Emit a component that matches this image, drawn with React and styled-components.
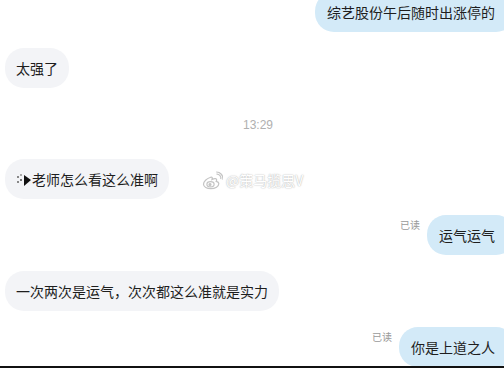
import React from "react";
import styled, { createGlobalStyle } from "styled-components";

const Global = createGlobalStyle`
  html, body { margin: 0; padding: 0; background: #ffffff; }
  body { font-family: "Noto Sans CJK SC", "Noto Sans", "Liberation Sans", sans-serif; }
`;

const Page = styled.div`
  position: relative;
  width: 504px;
  height: 368px;
  overflow: hidden;
  background: #fff;
  border-bottom: 2px solid #111;
  box-sizing: border-box;
`;

const Thread = styled.div`
  display: flex;
  flex-direction: column;
  margin-top: -8px;
  padding-left: 5px;
  margin-right: -11px;
`;

const Row = styled.div`
  display: flex;
  justify-content: ${(p) => (p.$mine ? "flex-end" : "flex-start")};
  align-items: flex-start;
  gap: 7px;
  margin-bottom: ${(p) => p.$gap ?? 16}px;
`;

const Bubble = styled.div`
  background: ${(p) => (p.$mine ? "#d3eaf8" : "#f3f4f7")};
  color: #1e1e1e;
  font-size: 14px;
  line-height: 20px;
  padding: ${(p) => (p.$mine ? "10px 20px 10px 12px" : "10px 11px")};
  border-radius: 19px;
  white-space: nowrap;
  display: flex;
  align-items: center;
`;

const Read = styled.span`
  font-size: 10px;
  line-height: 12px;
  color: #9a9a9a;
  margin-top: 4px;
`;

const Time = styled.div`
  text-align: center;
  font-size: 12px;
  line-height: 20px;
  color: #b0b0b0;
  margin: 27px 0 24px;
  padding-right: 4px;
  font-family: "Liberation Sans", sans-serif;
`;

const Redact = styled.span`
  display: inline-flex;
  width: 16px;
  height: 20px;
  align-items: center;
`;

const Watermark = styled.div`
  position: absolute;
  left: 202px;
  top: 170px;
  display: flex;
  align-items: center;
  gap: 3px;
  font-size: 14px;
  line-height: 20px;
  color: #fff;
  text-shadow: 0 0 1px #b8b8b8, 0 0 2px #c8c8c8;
`;

function WeiboLogo() {
  return (
    <svg width="21" height="19" viewBox="0 0 21 19" fill="none" stroke="#c4c4c4" strokeWidth="1.2">
      <path d="M8 6.5c-3.2 1-6.5 4-6.5 6.8 0 2.6 3.4 4.3 7.3 4.3 4.6 0 8-2.3 8-4.8 0-1.6-1.6-2.3-2.6-2.5 .8-1.3.6-2.5-.7-2.7-1.2-.2-2.8.5-3.5.9.6-1.700.3-3.1-2-2z" />
      <ellipse cx="8.5" cy="13.3" rx="3.6" ry="2.6" />
      <circle cx="8" cy="13.5" r="1" fill="#c4c4c4" />
      <path d="M14.5 3.2a4 4 0 0 1 4.3 5" />
      <path d="M14.2 1a6.5 6.5 0 0 1 6.6 7.6" />
    </svg>
  );
}

export default function App() {
  return (
    <>
      <Global />
      <Page>
        <Thread>
          <Row $mine>
            <Bubble $mine>综艺股份午后随时出涨停的</Bubble>
          </Row>
          <Row $gap={0}>
            <Bubble>太强了</Bubble>
          </Row>
          <Time>13:29</Time>
          <Row>
            <Bubble>
              <Redact>
                <svg width="16" height="20" viewBox="0 0 16 20">
                  <rect x="1" y="7" width="2" height="2" fill="#888" />
                  <rect x="1" y="12" width="2" height="2" fill="#888" />
                  <rect x="4" y="5" width="2" height="2" fill="#aaa" />
                  <rect x="4" y="10" width="2" height="2" fill="#777" />
                  <path d="M8 6 L15 11 L8 17 Z" fill="#111" />
                </svg>
              </Redact>
              老师怎么看这么准啊
            </Bubble>
          </Row>
          <Row $mine>
            <Read>已读</Read>
            <Bubble $mine>运气运气</Bubble>
          </Row>
          <Row>
            <Bubble>一次两次是运气，次次都这么准就是实力</Bubble>
          </Row>
          <Row $mine>
            <Read>已读</Read>
            <Bubble $mine>你是上道之人</Bubble>
          </Row>
        </Thread>
        <Watermark>
          <WeiboLogo />
          <span>@策马揽思V</span>
        </Watermark>
      </Page>
    </>
  );
}
